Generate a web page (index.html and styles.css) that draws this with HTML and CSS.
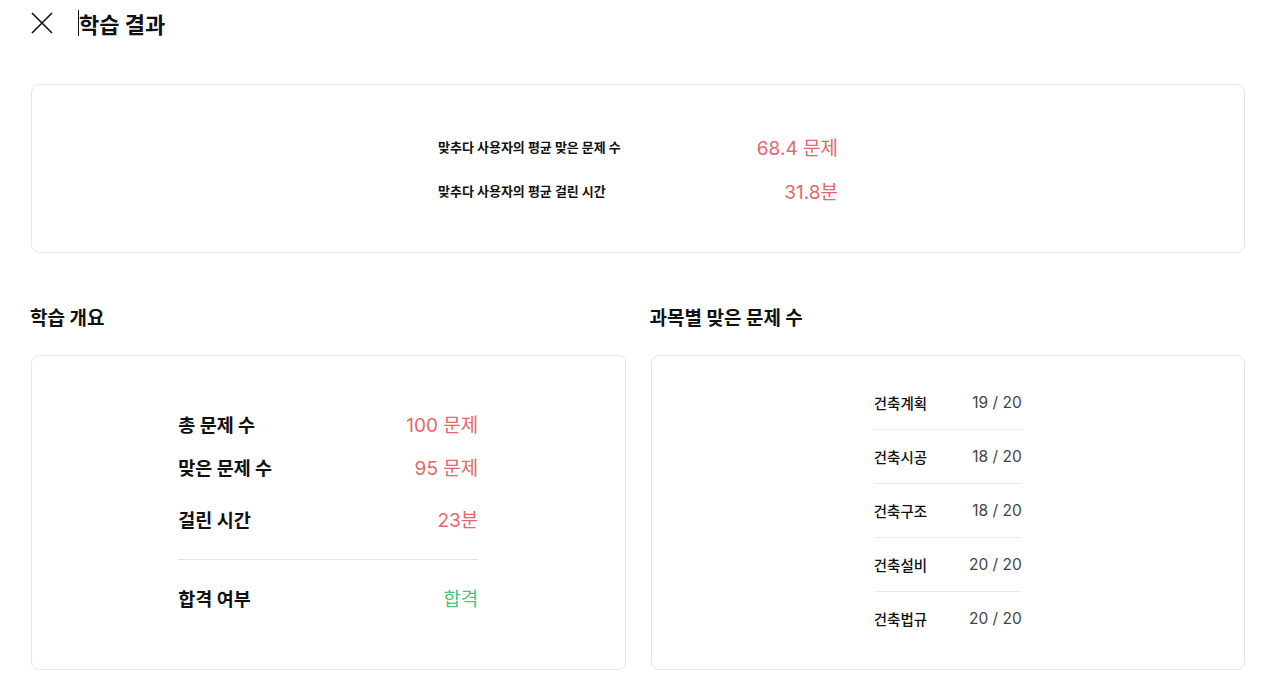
FILE: index.html
```html
<!DOCTYPE html>
<html lang="ko">
<head>
    <meta charset="UTF-8">
    <meta name="viewport" content="width=device-width, initial-scale=1.0">
    <title>학습 결과</title>
    <link rel="stylesheet" href="styles.css">
</head>
<body>
    <div class="header">
        <button class="btn-close" aria-label="닫기">
            <svg width="22" height="22" viewBox="0 0 22 22" fill="none" stroke="#111" stroke-width="1.6">
                <path d="M1 1L21 21M21 1L1 21"/>
            </svg>
        </button>
        <h1 class="title"><span class="caret"></span>학습 결과</h1>
    </div>

    <div class="page">
        <div class="card card-avg">
            <div class="avg-list">
                <div class="avg-row">
                    <span class="avg-label">맞추다 사용자의 평균 맞은 문제 수</span>
                    <span class="avg-value">68.4 문제</span>
                </div>
                <div class="avg-row">
                    <span class="avg-label">맞추다 사용자의 평균 걸린 시간</span>
                    <span class="avg-value">31.8분</span>
                </div>
            </div>
        </div>

        <div class="columns">
            <div class="column">
                <h2 class="section-title">학습 개요</h2>
                <div class="card card-summary">
                    <div class="summary">
                        <div class="sum-row">
                            <span class="sum-label">총 문제 수</span>
                            <span class="sum-value">100 문제</span>
                        </div>
                        <div class="sum-row">
                            <span class="sum-label">맞은 문제 수</span>
                            <span class="sum-value">95 문제</span>
                        </div>
                        <div class="sum-row sum-time">
                            <span class="sum-label">걸린 시간</span>
                            <span class="sum-value">23분</span>
                        </div>
                        <div class="sum-divider"></div>
                        <div class="sum-row sum-pass">
                            <span class="sum-label">합격 여부</span>
                            <span class="sum-value pass">합격</span>
                        </div>
                    </div>
                </div>
            </div>
            <div class="column">
                <h2 class="section-title">과목별 맞은 문제 수</h2>
                <div class="card card-subject">
                    <ul class="subjects">
                        <li><span>건축계획</span><span class="score">19 / 20</span></li>
                        <li><span>건축시공</span><span class="score">18 / 20</span></li>
                        <li><span>건축구조</span><span class="score">18 / 20</span></li>
                        <li><span>건축설비</span><span class="score">20 / 20</span></li>
                        <li><span>건축법규</span><span class="score">20 / 20</span></li>
                    </ul>
                </div>
            </div>
        </div>
    </div>
</body>
</html>
```

FILE: styles.css
```css
body, html {
    margin: 0;
    padding: 0;
    background: #fff;
    color: #111;
    font-family: Inter, "Noto Sans CJK KR", sans-serif;
}
.header {
    display: flex;
    align-items: center;
    height: 46px;
    padding-left: 31px;
}
.btn-close {
    border: none;
    background: none;
    padding: 0;
    width: 22px;
    height: 22px;
    cursor: pointer;
    display: flex;
}
.title {
    margin: 0 0 0 25px;
    font-size: 22px;
    font-weight: 700;
    display: flex;
    align-items: center;
}
.caret {
    display: inline-block;
    width: 1px;
    height: 26px;
    background: #111;
}
.page {
    padding: 38px 24px 0 31px;
}
.card {
    border: 1px solid #e6e6e6;
    border-radius: 8px;
    box-sizing: border-box;
    display: flex;
    justify-content: center;
    align-items: center;
}
.card-avg {
    height: 169px;
}
.avg-list {
    width: 400px;
}
.avg-row {
    display: flex;
    justify-content: space-between;
    align-items: center;
    height: 44px;
}
.avg-label {
    font-size: 13px;
    font-weight: 700;
}
.avg-value {
    font-size: 19px;
    color: #e8666b;
}
.columns {
    display: flex;
    gap: 25px;
}
.column {
    flex: 1;
}
.section-title {
    margin: 50px 0 0 -1px;
    height: 52px;
    font-size: 19px;
    font-weight: 700;
}
.card-summary, .card-subject {
    height: 315px;
}
.summary {
    width: 300px;
    margin-top: -4px;
}
.sum-row {
    display: flex;
    justify-content: space-between;
    align-items: center;
    height: 43px;
}
.sum-label {
    font-size: 18.5px;
    font-weight: 700;
}
.sum-value {
    font-size: 19px;
    color: #e8666b;
}
.sum-value.pass {
    color: #4cc47a;
}
.sum-time {
    margin-top: 9px;
}
.sum-divider {
    margin-top: 19px;
    border-top: 1px solid #e4e4e4;
}
.sum-pass {
    margin-top: 16px;
}
.subjects {
    list-style-type: none;
    margin: -4px 0 0;
    padding: 0;
    width: 148px;
}
.subjects li {
    display: flex;
    justify-content: space-between;
    align-items: center;
    height: 53px;
    border-bottom: 1px solid #ececec;
    font-size: 14.5px;
    font-weight: 500;
}
.subjects li:last-child {
    border-bottom: none;
}
.score {
    font-size: 15.5px;
    font-weight: 400;
    color: #444;
}
```
